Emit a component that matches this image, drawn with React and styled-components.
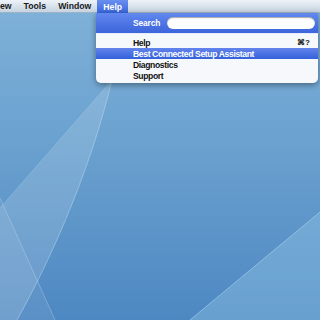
import React from "react";
import styled, { createGlobalStyle } from "styled-components";

const GlobalStyle = createGlobalStyle`
  html, body {
    margin: 0;
    padding: 0;
    width: 320px;
    height: 320px;
    overflow: hidden;
  }
  body {
    font-family: "Liberation Sans", Arial, sans-serif;
  }
`;

const Desktop = styled.div`
  position: relative;
  width: 320px;
  height: 320px;
  overflow: hidden;
  background: linear-gradient(to bottom, #80b2d9 0%, #6aa1cf 45%, #4e88c2 100%);
`;

const Wallpaper = styled.svg`
  position: absolute;
  inset: 0;
  width: 320px;
  height: 320px;
`;

const MenuBar = styled.div`
  position: relative;
  z-index: 1;
  display: flex;
  align-items: stretch;
  height: 13px;
  background: linear-gradient(to bottom, #eef3f8 0%, #d9e3ec 50%, #c6d4e1 100%);
  border-bottom: 1px solid #9fb3c6;
  box-sizing: border-box;
`;

const MenuTitle = styled.div`
  display: flex;
  align-items: center;
  padding: 0 ${(p) => (p.$first ? "0" : "6px")};
  margin-right: ${(p) => (p.$first ? "6px" : "0")};
  font-size: 8.7px;
  font-weight: bold;
  color: ${(p) => (p.$active ? "#fff" : "#1a1a1a")};
  background: ${(p) =>
    p.$active ? "linear-gradient(to bottom, #6a8ff0, #3563dc)" : "transparent"};
  height: ${(p) => (p.$active ? "14px" : "auto")};
`;

const Dropdown = styled.div`
  position: absolute;
  z-index: 2;
  left: 96px;
  top: 13px;
  width: 222px;
  background: rgba(250, 251, 253, 0.97);
  border-radius: 0 0 5px 5px;
  box-shadow: 0 2px 6px rgba(0, 0, 0, 0.4);
  overflow: hidden;
`;

const SearchHeader = styled.div`
  display: flex;
  align-items: center;
  gap: 7px;
  height: 20px;
  padding: 0 3px 0 37px;
  background: linear-gradient(to bottom, #6289ee 0%, #4a72e2 60%, #3d66dc 100%);
  border-bottom: 1px solid #e6ecf7;
`;

const SearchLabel = styled.span`
  font-size: 8.4px;
  font-weight: bold;
  letter-spacing: -0.1px;
  color: #fff;
`;

const SearchField = styled.div`
  flex: 1;
  height: 12px;
  border-radius: 6px;
  background: #fff;
  box-shadow: inset 0 1px 1px rgba(0, 0, 0, 0.35);
`;

const ItemList = styled.div`
  display: flex;
  flex-direction: column;
  padding: 3px 0 2px;
`;

const Item = styled.div`
  display: flex;
  align-items: center;
  justify-content: space-between;
  height: 11px;
  padding: 0 8px 0 37px;
  font-size: 8.6px;
  font-weight: bold;
  letter-spacing: -0.38px;
  color: ${(p) => (p.$selected ? "#fff" : "#111")};
  background: ${(p) =>
    p.$selected ? "linear-gradient(to bottom, #6384ec, #3461da)" : "transparent"};
`;

const Shortcut = styled.span`
  font-size: 8px;
  letter-spacing: 0;
`;

const items = [
  { label: "Help", shortcut: "⌘?" },
  { label: "Best Connected Setup Assistant", selected: true },
  { label: "Diagnostics" },
  { label: "Support" },
];

export default function App() {
  return (
    <Desktop>
      <GlobalStyle />
      <Wallpaper viewBox="0 0 320 320">
        <path d="M112 80 L0 208 L0 320 L17 320 C45 270 88 180 112 80 Z" fill="#fff" fillOpacity="0.14" />
        <path d="M112 80 C88 180 45 270 17 320" stroke="#cfe6f5" strokeOpacity="0.5" strokeWidth="0.8" fill="none" />
        <path d="M112 80 L0 208" stroke="#cfe6f5" strokeOpacity="0.3" strokeWidth="0.7" fill="none" />
        <path d="M0 198 L55 320 L0 320 Z" fill="#fff" fillOpacity="0.07" />
        <path d="M0 198 L55 320" stroke="#cfe6f5" strokeOpacity="0.45" strokeWidth="0.7" fill="none" />
        <path d="M320 212 L190 320 L320 320 Z" fill="#9fd2ee" fillOpacity="0.32" />
        <path d="M320 212 L190 320" stroke="#bfe2f5" strokeOpacity="0.6" strokeWidth="0.8" fill="none" />
      </Wallpaper>
      <MenuBar>
        <MenuTitle $first>ew</MenuTitle>
        <MenuTitle>Tools</MenuTitle>
        <MenuTitle>Window</MenuTitle>
        <MenuTitle $active>Help</MenuTitle>
      </MenuBar>
      <Dropdown>
        <SearchHeader>
          <SearchLabel>Search</SearchLabel>
          <SearchField />
        </SearchHeader>
        <ItemList>
          {items.map((it) => (
            <Item key={it.label} $selected={it.selected}>
              <span>{it.label}</span>
              {it.shortcut && <Shortcut>{it.shortcut}</Shortcut>}
            </Item>
          ))}
        </ItemList>
      </Dropdown>
    </Desktop>
  );
}
